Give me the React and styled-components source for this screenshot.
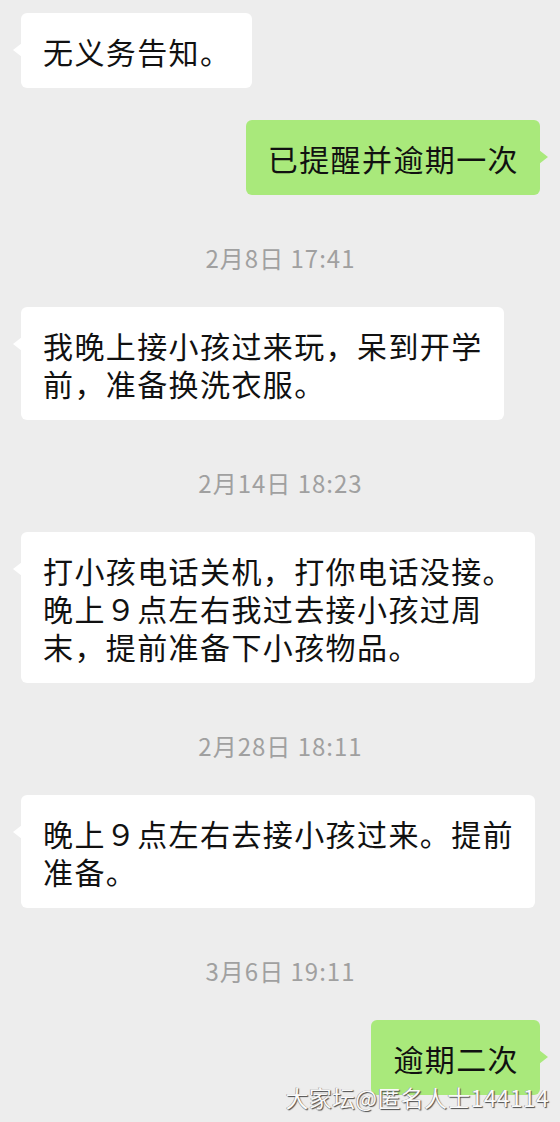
import React from "react";
import styled, { createGlobalStyle } from "styled-components";

const GlobalStyle = createGlobalStyle`
  html, body {
    margin: 0;
    padding: 0;
    background: #ededed;
  }
  body {
    width: 560px;
    height: 1122px;
    overflow: hidden;
    font-family: "Noto Sans CJK SC", "Noto Sans", sans-serif;
  }
`;

const Screen = styled.div`
  position: relative;
  width: 560px;
  height: 1122px;
  background: #ededed;
  overflow: hidden;
`;

const Chat = styled.div`
  display: flex;
  flex-direction: column;
  padding: 13px 20px 0 21px;
`;

const Row = styled.div`
  display: flex;
  justify-content: ${(props) => (props.$mine ? "flex-end" : "flex-start")};
  & + & {
    margin-top: 32px;
  }
`;

const Bubble = styled.div`
  position: relative;
  background: ${(props) => (props.$mine ? "#a9e97b" : "#ffffff")};
  color: #111;
  border-radius: 6px;
  padding: 18.5px 21px 18.5px 22px;
  font-size: 30px;
  letter-spacing: 1.4px;
  line-height: 38px;
  white-space: nowrap;
  &::before {
    content: "";
    position: absolute;
    top: 30px;
    ${(props) => (props.$mine ? "right: -8px;" : "left: -8px;")}
    width: 0;
    height: 0;
    border-top: 7px solid transparent;
    border-bottom: 7px solid transparent;
    ${(props) =>
      props.$mine
        ? "border-left: 9px solid #a9e97b;"
        : "border-right: 9px solid #ffffff;"}
  }
`;

const Time = styled.div`
  margin: 48px 0 34px;
  text-align: center;
  font-size: 24px;
  line-height: 30px;
  color: #a0a0a0;
  letter-spacing: 1px;
`;

const Watermark = styled.div`
  position: absolute;
  right: 11px;
  bottom: 12px;
  font-size: 23px;
  line-height: 26px;
  letter-spacing: 0.3px;
  color: #fafafa;
  text-shadow: 1px 1px 1px #4a4a4a, -0.5px -0.5px 0 #8a8a8a;
  white-space: nowrap;
`;

const messages = [
  { lines: ["无义务告知。"] },
  { mine: true, lines: ["已提醒并逾期一次"] },
  { time: "2月8日 17:41" },
  { lines: ["我晚上接小孩过来玩，呆到开学", "前，准备换洗衣服。"] },
  { time: "2月14日 18:23" },
  {
    lines: [
      "打小孩电话关机，打你电话没接。",
      "晚上９点左右我过去接小孩过周",
      "末，提前准备下小孩物品。",
    ],
  },
  { time: "2月28日 18:11" },
  { lines: ["晚上９点左右去接小孩过来。提前", "准备。"] },
  { time: "3月6日 19:11" },
  { mine: true, lines: ["逾期二次"] },
];

const App = () => {
  return (
    <Screen>
      <GlobalStyle />
      <Chat>
        {messages.map((msg, i) =>
          msg.time ? (
            <Time key={i}>{msg.time}</Time>
          ) : (
            <Row key={i} $mine={msg.mine}>
              <Bubble $mine={msg.mine}>
                {msg.lines.map((line, j) => (
                  <React.Fragment key={j}>
                    {j > 0 && <br />}
                    {line}
                  </React.Fragment>
                ))}
              </Bubble>
            </Row>
          )
        )}
      </Chat>
      <Watermark>大家坛@匿名人士144114</Watermark>
    </Screen>
  );
};

export default App;
